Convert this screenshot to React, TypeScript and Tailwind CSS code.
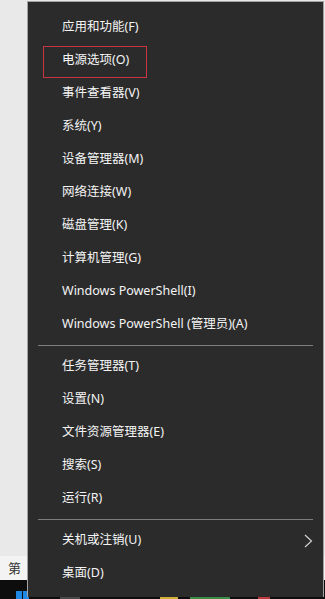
import React from "react";

const group1 = [
  "应用和功能(F)",
  "电源选项(O)",
  "事件查看器(V)",
  "系统(Y)",
  "设备管理器(M)",
  "网络连接(W)",
  "磁盘管理(K)",
  "计算机管理(G)",
  "Windows PowerShell(I)",
  "Windows PowerShell (管理员)(A)",
];
const group2 = ["任务管理器(T)", "设置(N)", "文件资源管理器(E)", "搜索(S)", "运行(R)"];

function Row({ label, boxed, chevron }: { label: string; boxed?: boolean; chevron?: boolean }) {
  return (
    <div className="relative h-[33px] flex items-center justify-between pl-[34px] pr-[10px]">
      <span className="text-[12.5px] leading-none text-[#f4f4f4] whitespace-nowrap">{label}</span>
      {chevron && (
        <svg width="9" height="14" viewBox="0 0 9 14">
          <polyline points="1,1 7.5,7 1,13" fill="none" stroke="#d8d8d8" strokeWidth="1.1" />
        </svg>
      )}
      {boxed && (
        <div className="absolute left-[15px] top-[2px] w-[104px] h-[32px] border border-[#c8343f]" />
      )}
    </div>
  );
}

function Sep() {
  return <div className="mx-[10px] my-[4px] h-px bg-[#7d7d7d]" />;
}

export default function App() {
  return (
    <div
      className="relative w-[325px] h-[599px] overflow-hidden bg-[#e9e9e9]"
      style={{ fontFamily: '"Noto Sans", "Noto Sans CJK SC", sans-serif' }}
    >
      {/* desktop background */}
      <div className="flex flex-col h-full">
        <div className="flex-1" />
        <div
          className="h-[24px] bg-[#f3f3f3] flex items-center pl-[8px] text-[13px] text-[#333]"
          style={{ fontFamily: '"Noto Sans CJK SC", sans-serif' }}
        >
          第
        </div>
        <div className="h-[19px] bg-[#0d0d0d] flex items-end">
          <div className="ml-[16px] flex gap-[1px]">
            <div className="w-[6px] h-[8px] bg-[#1e88e5]" />
            <div className="w-[6px] h-[8px] bg-[#1e88e5]" />
          </div>
          <div className="ml-[31px] w-[20px] h-[2px] bg-[#4a4a4a]" />
          <div className="ml-[80px] w-[18px] h-[2px] bg-[#c9b13a]" />
          <div className="ml-[12px] w-[40px] h-[2px] bg-[#3c8d4a]" />
          <div className="ml-[28px] w-[12px] h-[2px] bg-[#c23a3a]" />
        </div>
      </div>

      {/* context menu */}
      <div className="absolute left-[27px] top-[1px] w-[297px] h-[596px] bg-[#2b2b2b] border-l border-t border-r border-[#a3a3a3] pt-[9px] flex flex-col">
        {group1.map((l, i) => (
          <Row key={l} label={l} boxed={i === 1} />
        ))}
        <Sep />
        {group2.map((l) => (
          <Row key={l} label={l} />
        ))}
        <Sep />
        <Row label="关机或注销(U)" chevron />
        <Row label="桌面(D)" />
      </div>
    </div>
  );
}
